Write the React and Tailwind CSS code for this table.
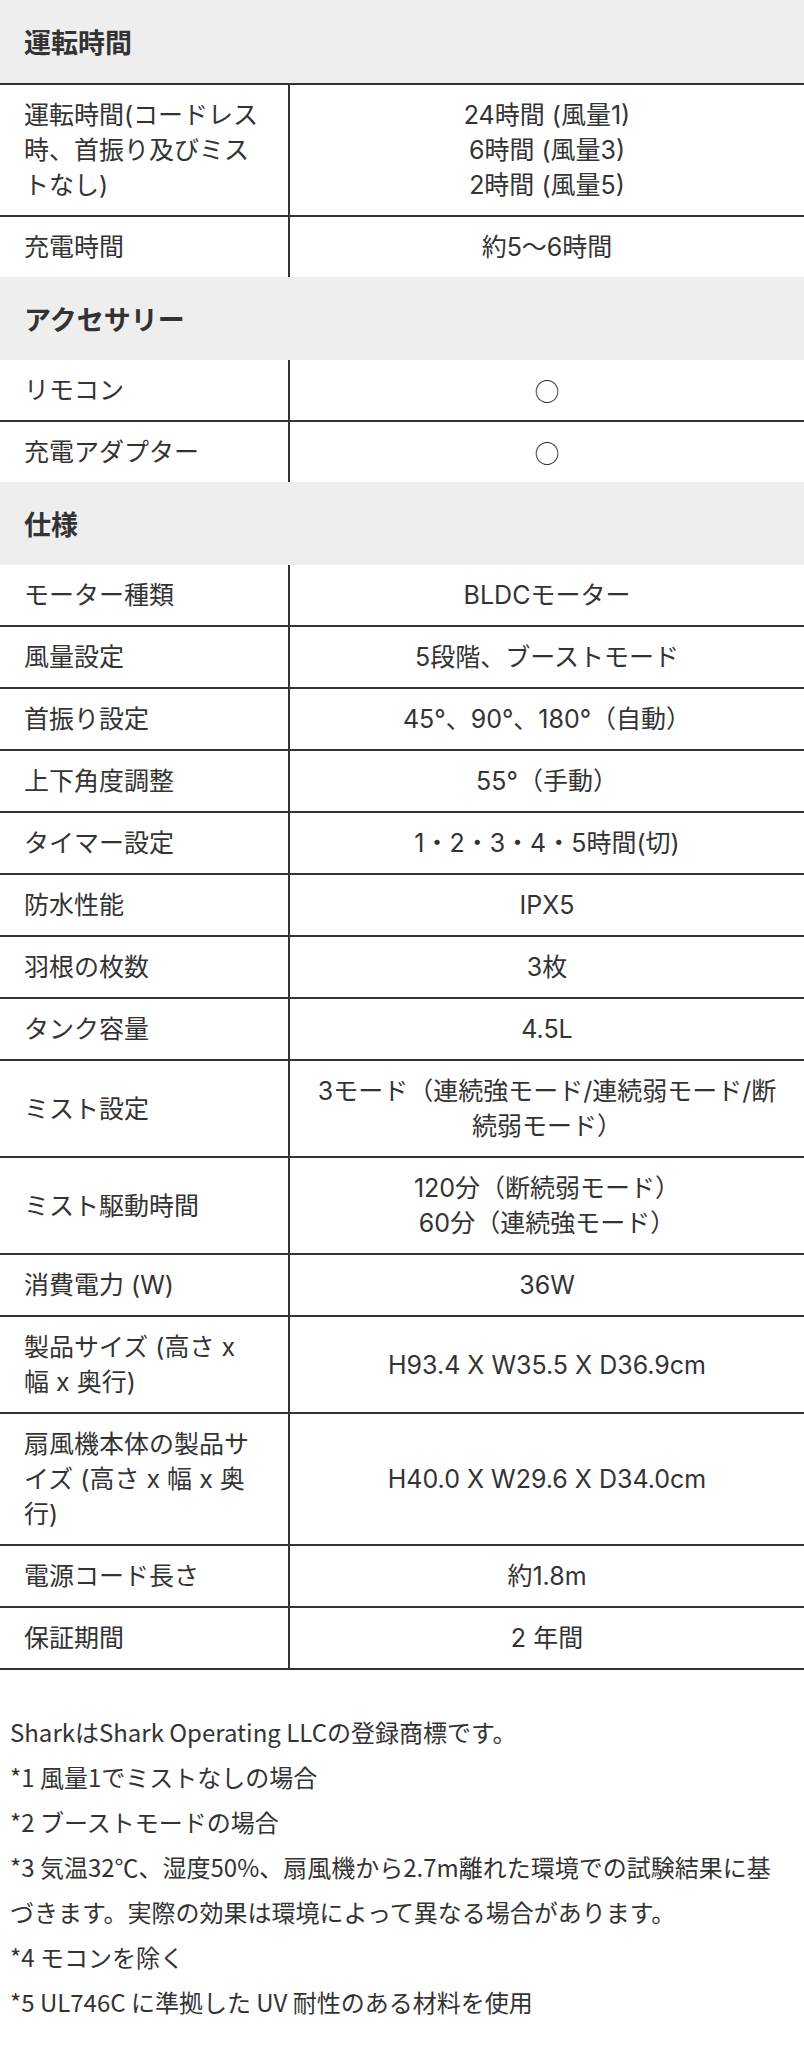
import React from "react";

const circle = <span className="block font-['Noto_Sans_CJK_JP',sans-serif]">○</span>;

const sections = [
  {
    title: "運転時間",
    rows: [
      [
        <>運転時間(コードレス<br />時、首振り及びミス<br />トなし)</>,
        <>24時間 (風量1)<br />6時間 (風量3)<br />2時間 (風量5)</>,
      ],
      ["充電時間", "約5〜6時間"],
    ],
  },
  {
    title: "アクセサリー",
    rows: [
      ["リモコン", circle],
      ["充電アダプター", circle],
    ],
  },
  {
    title: "仕様",
    rows: [
      ["モーター種類", "BLDCモーター"],
      ["風量設定", "5段階、ブーストモード"],
      ["首振り設定", "45°、90°、180°（自動）"],
      ["上下角度調整", "55°（手動）"],
      ["タイマー設定", "1・2・3・4・5時間(切)"],
      ["防水性能", "IPX5"],
      ["羽根の枚数", "3枚"],
      ["タンク容量", "4.5L"],
      ["ミスト設定", <>3モード（連続強モード/連続弱モード/断<br />続弱モード）</>],
      ["ミスト駆動時間", <>120分（断続弱モード）<br />60分（連続強モード）</>],
      ["消費電力 (W)", "36W"],
      [<>製品サイズ (高さ x<br />幅 x 奥行)</>, "H93.4 X W35.5 X D36.9cm"],
      [<>扇風機本体の製品サ<br />イズ (高さ x 幅 x 奥<br />行)</>, "H40.0 X W29.6 X D34.0cm"],
      ["電源コード長さ", "約1.8m"],
      ["保証期間", "2 年間"],
    ],
  },
];

const notes = [
  "SharkはShark Operating LLCの登録商標です。",
  "*1 風量1でミストなしの場合",
  "*2 ブーストモードの場合",
  "*3 気温32℃、湿度50%、扇風機から2.7m離れた環境での試験結果に基づきます。実際の効果は環境によって異なる場合があります。",
  "*4 モコンを除く",
  "*5 UL746C に準拠した UV 耐性のある材料を使用",
];

export default function App() {
  return (
    <div className="w-[804px] bg-white text-[#333] font-['Noto_Sans_CJK_JP',sans-serif]">
      {sections.map((section, si) => (
        <div key={section.title}>
          {/* section title */}
          <div className="bg-[#eeeeee] px-[24px] py-[24px] text-[27px] font-bold leading-[35px]">
            {section.title}
          </div>
          <div
            className={
              "divide-y-2 divide-[#333] " +
              (si === 0 ? "border-t-2 border-[#333] " : "") +
              (si === sections.length - 1 ? "border-b-2 border-[#333]" : "")
            }
          >
            {section.rows.map((row, ri) => (
              <div
                key={ri}
                className="flex font-['Inter','Noto_Sans_CJK_JP',sans-serif] text-[25px] leading-[35px]"
              >
                <div className="flex w-[290px] shrink-0 items-center border-r-2 border-[#333] pl-[24px] pr-[20px] pt-[13px] pb-[12px]">
                  <div>{row[0]}</div>
                </div>
                <div className="flex flex-1 items-center justify-center px-[14px] pt-[13px] pb-[12px] text-center">
                  <div>{row[1]}</div>
                </div>
              </div>
            ))}
          </div>
        </div>
      ))}
      {/* notes */}
      <div className="px-[10px] pt-[39px] pb-[44px] text-[24px] leading-[45px]">
        {notes.map((n) => (
          <p key={n}>{n}</p>
        ))}
      </div>
    </div>
  );
}
